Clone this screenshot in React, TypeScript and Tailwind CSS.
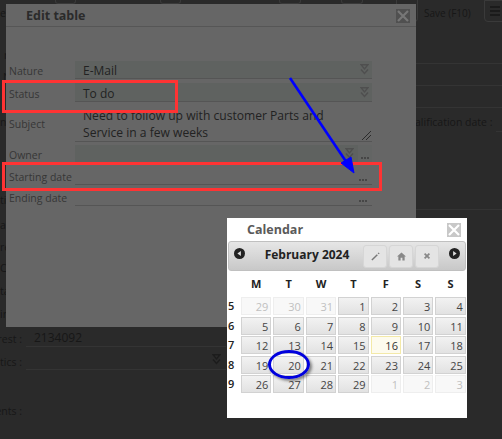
const sans = "font-['Open_Sans','Noto_Sans',sans-serif]";
const bold = "font-['Open_Sans',sans-serif] font-bold";

const leftBits = [
  { text: "r", top: "mt-[22px]", pad: "pl-[4px]" },
  { text: "N", top: "mt-[8px]", pad: "pl-[3px]" },
  { text: "n", top: "mt-[31px]", pad: "pl-0" },
  { text: "ti", top: "mt-[64px]", pad: "pl-0" },
  { text: "ar", top: "mt-[11px]", pad: "pl-0" },
  { text: "re", top: "mt-[8px]", pad: "pl-0" },
  { text: "C", top: "mt-[7px]", pad: "pl-0" },
  { text: "ta", top: "mt-[9px]", pad: "pl-0" },
  { text: "ir", top: "mt-[9px]", pad: "pl-0" },
];

const weeks = [
  { n: 5, days: [[29, 1], [30, 1], [31, 1], [1], [2], [3], [4]] },
  { n: 6, days: [[5], [6], [7], [8], [9], [10], [11]] },
  { n: 7, days: [[12], [13], [14], [15], [16, 2], [17], [18]] },
  { n: 8, days: [[19], [20], [21], [22], [23], [24], [25]] },
  { n: 9, days: [[26], [27], [28], [29], [1, 1], [2, 1], [3, 1]] },
];

const Chevrons = ({ className = "" }: { className?: string }) => (
  <svg viewBox="0 0 9 11" className={`w-[9px] h-[11px] ${className}`} fill="none" stroke="currentColor">
    <path d="M1 .7h7L4.5 5z" strokeWidth="1.4" />
    <path d="M1 5.5l3.5 4 3.5-4" strokeWidth="1.4" />
  </svg>
);

const Dots = () => (
  <div className="flex gap-[1px]">
    <span className="w-[2px] h-[2px] bg-[#464646]" />
    <span className="w-[2px] h-[2px] bg-[#464646]" />
    <span className="w-[2px] h-[2px] bg-[#464646]" />
  </div>
);

const CloseBox = ({ className }: { className: string }) => (
  <div className={`flex items-center justify-center ${className}`}>
    <svg viewBox="0 0 12 12" className="w-[12px] h-[12px]" stroke="currentColor" strokeWidth="2.2">
      <path d="M1 1l10 10M11 1L1 11" />
    </svg>
  </div>
);

const Field = ({
  label,
  height,
  mb,
  filled,
  children,
}: {
  label: string;
  height: string;
  mb: string;
  filled?: boolean;
  children?: React.ReactNode;
}) => (
  <div className={`flex ${height} ${mb}`}>
    <div className="w-[66px] shrink-0 flex items-end pb-px text-[10.5px] leading-[14px] text-[#363636] whitespace-nowrap">{label}</div>
    <div className={`flex-1 flex items-center border-b border-[#555555] ${filled ? "bg-[#5f6260]" : ""}`}>{children}</div>
  </div>
);

const Toolbutton = ({ className }: { className: string }) => (
  <div className={`h-[4px] rounded-b-[3px] border border-t-0 border-[#3a3a3a] ${className}`} />
);

const CutLabel = ({ text }: { text: string }) => (
  <div className="w-[22px] shrink-0 flex justify-end text-[10.5px] leading-[16px] whitespace-nowrap">
    <span className="shrink-0">{text}</span>
  </div>
);

export default function App() {
  return (
    <div className={`relative w-[502px] h-[439px] overflow-hidden bg-[#2a2a2a] text-[#171717] ${sans}`}>
      {/* page behind the overlay */}
      <div className="flex items-start h-[26px]">
        <span className="mt-[6px] w-[6px] overflow-hidden text-[10.5px] leading-[14px]">ea</span>
        <Toolbutton className="ml-[49px] w-[21px]" />
        <Toolbutton className="ml-[84px] w-[21px]" />
        <Toolbutton className="ml-[98px] w-[22px]" />
        <Toolbutton className="ml-[40px] w-[22px]" />
        <div className="ml-[33px] w-[22px] h-[22px] rounded-b-[4px] border border-t-0 border-[#3a3a3a]" />
        <span className="ml-[6px] mt-[5px] text-[10px] leading-[16px] whitespace-nowrap">Save (F10)</span>
        <div className="ml-auto w-[22px] h-[22px] -mr-[4px] rounded-b-[4px] border border-[#3a3a3a] flex flex-col justify-center gap-[2px] pl-[5px]">
          <span className="w-[10px] h-[2px] bg-[#1b1b1b]" />
          <span className="w-[10px] h-[2px] bg-[#1b1b1b]" />
          <span className="w-[10px] h-[2px] bg-[#1b1b1b]" />
        </div>
      </div>
      <div className="flex h-[304px]">
        <div className="w-[6px] overflow-hidden flex flex-col text-[10.5px] leading-[14px] whitespace-nowrap">
          {leftBits.map((b, i) => (
            <span key={i} className={`${b.top} ${b.pad}`}>
              {b.text}
            </span>
          ))}
        </div>
        <div className="flex-1 flex flex-col items-end">
          <div className="mt-[37px] w-[86px] border-t border-[#343434]" />
          <div className="mt-[21px] w-[86px] border-t border-[#343434]" />
          <div className="mt-[21px] w-[86px] border-t border-[#343434]" />
          <div className="mt-[6px] w-[87px] text-[10.5px] leading-[16px] whitespace-nowrap">alification date :</div>
          <div className="mt-[1px] w-[6px] border-t border-[#343434]" />
          <div className="mt-[77px] w-[86px] border-t border-[#343434]" />
        </div>
      </div>
      <div className="flex flex-col">
        <div className="flex items-end h-[16px] mt-[1px]">
          <CutLabel text="rest :" />
          <div className="ml-[4px] w-[200px] border-b border-[#343434] text-[12px] leading-[16px] pl-[8px]">2134092</div>
        </div>
        <div className="flex items-end h-[16px] mt-[7px]">
          <CutLabel text="tics :" />
          <div className="ml-[4px] w-[200px] h-[16px] border-b border-[#343434] flex justify-end pr-[5px] text-[#1c1c1c]">
            <Chevrons />
          </div>
        </div>
        <div className="flex items-end h-[16px] mt-[33px]">
          <CutLabel text="ents :" />
        </div>
      </div>

      {/* Edit table dialog */}
      <div className="absolute left-[6px] top-[4px] w-[410px] h-[323px] bg-[#666666] flex flex-col">
        <div className="h-[23px] flex items-center justify-between pt-[2px] pl-[20px] pr-[6px] border-b border-[#565656]">
          <span className={`${bold} text-[12.5px] text-[#2b2b2b]`}>Edit table</span>
          <CloseBox className="w-[14px] h-[14px] bg-[#505050] text-[#777777]" />
        </div>
        <div className="flex flex-col pl-[3px] pr-[44px] pt-[34px]">
          <Field label="Nature" height="h-[18px]" mb="mb-[4px]" filled>
            <span className="ml-[8px] pt-[2px] text-[12px] text-[#222]">E-Mail</span>
            <Chevrons className="ml-auto mr-[3px] text-[#4f4f4f]" />
          </Field>
          <Field label="Status" height="h-[19px]" mb="mb-[5px]" filled>
            <span className="ml-[8px] pt-[3px] text-[12px] text-[#222]">To do</span>
            <Chevrons className="ml-auto mr-[3px] text-[#4f4f4f]" />
          </Field>
          <div className="flex h-[35px] mb-[3px]">
            <div className="w-[66px] shrink-0 flex items-center text-[10.5px] text-[#363636]">Subject</div>
            <div className="relative flex-1 border-b border-[#555555] overflow-hidden text-[12.1px] leading-[17px] text-[#222] pl-[8px]">
              <div className="whitespace-nowrap">Need to follow up with customer Parts and</div>
              <div>Service in a few weeks</div>
              <svg viewBox="0 0 9 9" className="absolute right-[1px] bottom-[1px] w-[9px] h-[9px]" stroke="#2b2b2b" fill="none">
                <path d="M0 9l9-9M4 9l5-5" />
              </svg>
            </div>
          </div>
          <Field label="Owner" height="h-[18px]" mb="mb-[5px]">
            <div className="flex-1 h-full bg-[#5f6260] flex items-center justify-end pr-[4px]">
              <Chevrons className="text-[#4f4f4f]" />
            </div>
            <div className="w-[14px] h-full flex items-end justify-center pb-[3px] bg-[#636564]">
              <Dots />
            </div>
          </Field>
          <Field label="Starting date" height="h-[17px]" mb="mb-[4px]">
            <div className="ml-auto w-[16px] h-full flex items-end justify-center pb-[3px] pr-[2px]">
              <Dots />
            </div>
          </Field>
          <Field label="Ending date" height="h-[17px]" mb="mb-0">
            <div className="ml-auto w-[16px] h-full flex items-end justify-center pb-[3px] pr-[2px]">
              <Dots />
            </div>
          </Field>
        </div>
      </div>

      {/* Calendar dialog */}
      <div className="absolute left-[227px] top-[218px] w-[240px] h-[200px] bg-white flex flex-col">
        <div className="h-[22px] flex items-center justify-between pt-[2px] pl-[20px] pr-[6px]">
          <span className={`${bold} text-[12.5px] text-[#5a5a5a]`}>Calendar</span>
          <CloseBox className="w-[14px] h-[14px] bg-[#c8c8c8] text-white" />
        </div>
        <div className="mx-px h-[30px] mt-px rounded-[3px] border border-[#c0c0c0] bg-gradient-to-b from-[#e6e6e6] to-[#c8c8c8] flex items-center pl-[5px] pr-[5px]">
          <svg viewBox="0 0 12 12" className="w-[11px] h-[11px] mb-[5px]">
            <circle cx="6" cy="6" r="6" fill="#222" />
            <path d="M7.5 3.2v5.6L3.7 6z" fill="#ddd" />
          </svg>
          <span className={`${bold} ml-[5px] w-[114px] pb-[2px] text-center text-[12px] text-[#222]`}>February 2024</span>
          <div className="flex gap-[2px] ml-[-1px]">
            <div className="w-[24px] h-[23px] rounded-[3px] bg-[#e4e4e4] border border-[#d6d6d6] flex items-center justify-center">
              <svg viewBox="0 0 10 10" className="w-[9px] h-[9px]" stroke="#777" strokeWidth="1.6">
                <path d="M1 9l6-6" />
                <path d="M8 2l1-1" />
              </svg>
            </div>
            <div className="w-[24px] h-[23px] rounded-[3px] bg-[#e4e4e4] border border-[#d6d6d6] flex items-center justify-center">
              <svg viewBox="0 0 10 10" className="w-[9px] h-[9px]" fill="#888">
                <path d="M5 .5L10 5H8.5v4.5H6V6.5H4v3H1.5V5H0z" />
              </svg>
            </div>
            <div className="w-[24px] h-[23px] rounded-[3px] bg-[#e4e4e4] border border-[#d6d6d6] flex items-center justify-center">
              <svg viewBox="0 0 10 10" className="w-[8px] h-[8px]" stroke="#888" strokeWidth="2.2">
                <path d="M2 2l6 6M8 2l-6 6" />
              </svg>
            </div>
          </div>
          <svg viewBox="0 0 12 12" className="w-[11px] h-[11px] mb-[5px] ml-auto">
            <circle cx="6" cy="6" r="6" fill="#222" />
            <path d="M4.5 3.2v5.6L8.3 6z" fill="#ddd" />
          </svg>
        </div>
        <div className="grid grid-cols-[12px_repeat(7,30.4px)] gap-x-[2px] mt-[6px]">
          <span />
          {["M", "T", "W", "T", "F", "S", "S"].map((d, i) => (
            <span key={i} className={`${bold} text-center text-[11px] leading-[14px] text-[#222]`}>
              {d}
            </span>
          ))}
        </div>
        <div className="grid grid-cols-[12px_repeat(7,30.4px)] gap-x-[2px] gap-y-[1.6px] mt-[6px]">
          {weeks.map((w) => [
            <span key={w.n} className="pl-[1px] text-[11px] font-semibold leading-[18px] text-[#222]">
              {w.n}
            </span>,
            ...w.days.map((d, i) => (
              <div
                key={`${w.n}-${i}`}
                className={`h-[18px] border pr-[2px] text-right text-[11px] leading-[17px] ${
                  d[1] === 1
                    ? "border-[#eeeeee] bg-[#f8f8f8] text-[#c0c0c0]"
                    : d[1] === 2
                      ? "border-[#f3e9a8] bg-[#fdfbee] text-[#333]"
                      : "border-[#d2d2d2] bg-gradient-to-b from-[#f2f2f2] to-[#e2e2e2] text-[#444]"
                }`}
              >
                {d[0]}
              </div>
            )),
          ])}
        </div>
      </div>

      {/* annotations */}
      <div className="absolute left-[2px] top-[80px] w-[176px] h-[33px] border-[3px] border-[#ff3333]" />
      <div className="absolute left-[2px] top-[162px] w-[380px] h-[29px] border-[3px] border-[#ff3333]" />
      <svg className="absolute left-[285px] top-[75px] w-[75px] h-[105px]" viewBox="0 0 75 105">
        <path d="M5 3l57 85" stroke="#0000ff" strokeWidth="2.6" fill="none" />
        <path d="M69 98L56 88l10-6z" fill="#0000ff" stroke="#0000ff" />
      </svg>
      <div className="absolute left-[268px] top-[350px] w-[42px] h-[29px] rounded-[50%] border-[3px] border-[#0000dd] shadow-[2px_2px_3px_rgba(0,0,0,0.45)]" />
    </div>
  );
}
